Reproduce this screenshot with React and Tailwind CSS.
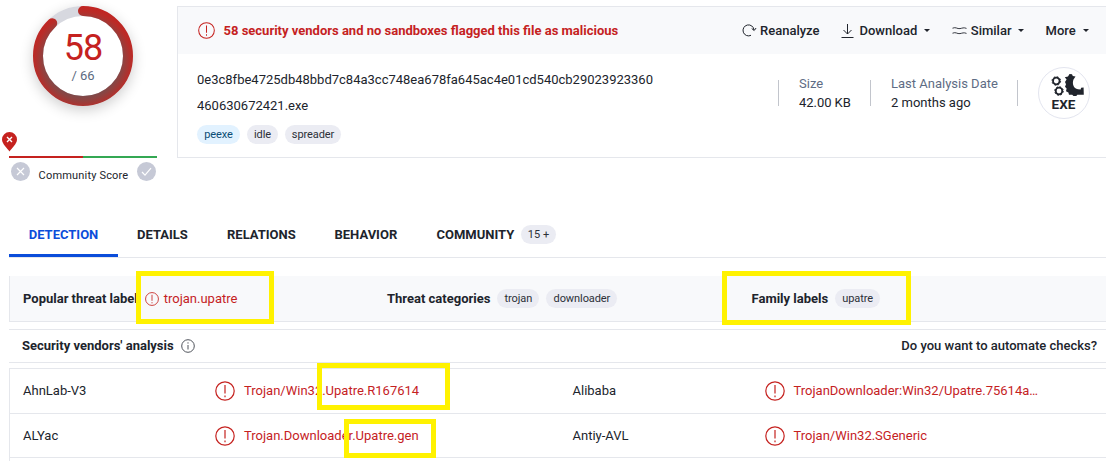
import React from "react";

function Alert({ size, sw = 1.2 }) {
  return (
    <svg className="shrink-0" width={size} height={size} viewBox="0 0 20 20" fill="none" stroke="#c5221f" strokeWidth={sw}>
      <circle cx="10" cy="10" r="9.2" />
      <path d="M10 4v8.6M10 14.5v1.7" />
    </svg>
  );
}

function Tag({ children, className = "" }) {
  return (
    <span className={"flex h-[19px] items-center rounded-full bg-[#ebecf3] text-[11px] tracking-[-0.08px] text-[#2c3038] " + className}>
      {children}
    </span>
  );
}

function Caret({ className = "" }) {
  return (
    <svg className={className} width="6" height="3" viewBox="0 0 6 3">
      <path d="M0 0h6L3 3z" fill="#20242c" />
    </svg>
  );
}

function Gauge() {
  return (
    <div className="relative mt-[6px] ml-[24px] h-[100px] w-[100px] rounded-full shadow-[0_4px_14px_rgba(0,0,0,0.2)]">
      <svg width="100" height="100" viewBox="0 0 100 100" fill="none">
        <defs>
          <radialGradient id="ring" gradientUnits="userSpaceOnUse" cx="46" cy="50" r="55">
            <stop offset="0.65" stopColor="#7d4a4a" />
            <stop offset="0.72" stopColor="#8c4442" />
            <stop offset="0.88" stopColor="#b92c28" />
            <stop offset="1" stopColor="#c5221f" />
          </radialGradient>
        </defs>
        <circle cx="50" cy="50" r="45" stroke="#d7d8df" strokeWidth="10" fill="#fff" />
        <circle cx="50" cy="50" r="45" stroke="url(#ring)" strokeWidth="10" strokeLinecap="round" strokeDasharray="248.5 400" transform="rotate(-90 50 50)" />
      </svg>
      <div className="absolute inset-0 flex flex-col items-center">
        <span className="mt-[21px] text-[36px] leading-[43px] tracking-[-0.9px] text-[#c5221f]">58</span>
        <span className="text-[13px] leading-[12px] text-[#5b6a80]">/ 66</span>
      </div>
    </div>
  );
}

function ScoreSide() {
  return (
    <div className="h-[209px] w-[168px] shrink-0">
      <Gauge />
      <svg className="-ml-[7px] mt-[26px]" width="15" height="20" viewBox="0 0 15 20">
        <path d="M7.5 19.5C5.5 16.5 0 12 0 7.5a7.5 7.5 0 0 1 15 0C15 12 9.500 16.500 7.500 19.500z" fill="#c5221f" />
        <path d="M5 5l5 5M10 5l-5 5" stroke="#fff" strokeWidth="1.4" />
      </svg>
      <div className="mt-[4px] flex h-[2px] w-[148px]">
        <div className="flex-1 bg-[#c5221f]" />
        <div className="flex-1 bg-[#34a853]" />
      </div>
      <div className="mt-[4px] flex h-[19px] w-[147px] items-center justify-between pl-[2px]">
        <svg width="19" height="19" viewBox="0 0 19 19" fill="none" stroke="#fff" strokeWidth="1.2">
          <circle cx="9.5" cy="9.500" r="9.500" fill="#c6c9d6" stroke="none" />
          <path d="M6 6l7 7M13 6l-7 7" />
        </svg>
        <span className="mt-[9px] text-[11px] leading-[16px] tracking-[0.18px] text-[#20242c]">Community Score</span>
        <svg width="19" height="19" viewBox="0 0 19 19" fill="none" stroke="#fff" strokeWidth="1.2">
          <circle cx="9.5" cy="9.500" r="9.500" fill="#c6c9d6" stroke="none" />
          <path d="M5 10l3 3.200 6-7" />
        </svg>
      </div>
    </div>
  );
}

function FileCard() {
  return (
    <div className="mt-[6px] h-[152px] w-[929px] shrink-0 border-y border-l border-[#e5e7ec]">
      <div className="flex h-[47px] items-center bg-[#f8f9fb] pl-[20px] text-[13px] font-medium">
        <Alert size={17} />
        <span className="ml-[8.5px] w-[518px] whitespace-nowrap font-bold text-[#c5221f]">
          58 security vendors and no sandboxes flagged this file as malicious
        </span>
        <svg width="15" height="13" viewBox="0 0 15 13" fill="none" stroke="#20242c">
          <path d="M9 11.300A5.500 5.500 0 1 1 12 6M9.700 4.500L12.200 6.500l1.900-2.500" />
        </svg>
        <span className="ml-[3.5px] w-[81px]">Reanalyze</span>
        <svg width="13" height="14" viewBox="0 0 13 14" fill="none" stroke="#20242c">
          <path d="M6.500 0v10M2.500 6l4 4 4-4M.5 13.500h12" />
        </svg>
        <span className="ml-[5.5px]">Download</span>
        <Caret className="ml-[6.5px]" />
        <svg className="ml-[22px]" width="15" height="9" viewBox="0 0 15 9" fill="none" stroke="#20242c" strokeWidth="0.9">
          <path d="M.5 2.200c3.500-1.600 4.500.9 7.500.4 2.500-.4 3.500-1.400 6.500-.2M.5 7.200c3.500-1.600 4.500.9 7.500.4 2.500-.4 3.500-1.400 6.500-.2" />
        </svg>
        <span className="ml-[4px]">Similar</span>
        <Caret className="ml-[6.5px]" />
        <span className="ml-[21.500px]">More</span>
        <Caret className="ml-[7px]" />
      </div>
      <div className="flex h-[103px] pl-[19px]">
        <div className="w-[581px] pt-[13px] text-[13px] leading-[26px]">
          <div>0e3c8fbe4725db48bbd7c84a3cc748ea678fa645ac4e01cd540cb29023923360</div>
          <div>460630672421.exe</div>
          <div className="mt-[6px] flex gap-[7px]">
            <Tag className="h-[19px]! w-[43px] justify-center bg-[#e2f2ff]! text-[#0b4d75]!">peexe</Tag>
            <Tag className="h-[19px]! w-[31px] justify-center">idle</Tag>
            <Tag className="h-[19px]! w-[56px] justify-center">spreader</Tag>
          </div>
        </div>
        <div className="mt-[26px] h-[26px] w-px bg-[#c2c5cc]" />
        <div className="w-[91px] pt-[20px] pl-[20px] text-[13px] leading-[19px]">
          <div className="text-[#5e6c84]">Size</div>
          <div className="tracking-[-0.05px]">42.00 KB</div>
        </div>
        <div className="mt-[26px] h-[26px] w-px bg-[#c2c5cc]" />
        <div className="w-[146px] pt-[20px] pl-[20px] text-[13px] leading-[19px]">
          <div className="text-[#5e6c84]">Last Analysis Date</div>
          <div>2 months ago</div>
        </div>
        <div className="mt-[26px] h-[26px] w-px bg-[#c2c5cc]" />
        <div className="mt-[13px] ml-[20px] flex h-[52px] w-[52px] flex-col items-center rounded-full border border-[#e3e5ef]">
          <svg className="mt-[5px] ml-[7px]" width="34" height="24" viewBox="0 0 34 24" fill="none">
            <circle cx="5.300" cy="8" r="3.300" stroke="#20242c" strokeWidth="1.800" />
            <circle cx="5.300" cy="8" r="4.300" stroke="#20242c" strokeWidth="1" strokeDasharray="1.700 1.680" />
            <circle cx="8" cy="18" r="3.300" stroke="#20242c" strokeWidth="1.800" />
            <circle cx="8" cy="18" r="4.300" stroke="#20242c" strokeWidth="1" strokeDasharray="1.700 1.680" />
            <path d="M13.800 4.200L17 3.600 18.500 1l2.500.2.800 1.800 2.700.5-2 3C21 10.500 22.300 15.500 27 16.300l2.600.2.500-1.700 2.500-.3.200 7.200h-6.500l-1 1.200h-2.800l-1.300-1.200-3.200.1-.6-2.300-2.400-1.200.6-2.800-1.600-1.700 1-2.600-1-2.300 1.600-2.400z" fill="#20242c" />
          </svg>
          <span className="-ml-px text-[13.5px] leading-[14px] font-bold">EXE</span>
        </div>
      </div>
    </div>
  );
}

function Tabs() {
  return (
    <nav className="flex h-[49px] border-b border-[#e5e7ec] text-[13px] font-bold">
      <div className="flex h-[48px] w-[109px] justify-center border-b-3 border-[#0b4dda] pt-[17px] leading-[18px] text-[#0b4dda]">DETECTION</div>
      <div className="ml-[19px] w-[90px] pt-[17px] leading-[18px]">DETAILS</div>
      <div className="w-[107.5px] pt-[17px] leading-[18px]">RELATIONS</div>
      <div className="w-[102px] pt-[17px] leading-[18px]">BEHAVIOR</div>
      <div className="w-[78px] pt-[17px] leading-[18px]">COMMUNITY</div>
      <Tag className="mt-[16px] ml-[6.5px] w-[35px] justify-center pt-px font-normal tracking-[0px]!">15 +</Tag>
    </nav>
  );
}

function Row({ cells, className }) {
  return (
    <div className={"flex items-center border-b border-l border-[#e5e7ec] pl-[13px] text-[13px] " + className}>
      {cells.map(([name, result], i) => (
        <div key={name} className={"flex items-center " + (i ? "" : "w-[549.5px]")}>
          <span className="w-[192px]">{name}</span>
          <Alert size={20} />
          <span className="ml-[9px] text-[#c5221f]">{result}</span>
        </div>
      ))}
    </div>
  );
}

export default function App() {
  return (
    <main className="relative h-[461px] w-[1106px] overflow-hidden bg-white pl-[9px] font-[Roboto,sans-serif] text-[#20242c]">
      <div className="flex h-[209px]">
        <ScoreSide />
        <FileCard />
      </div>
      <Tabs />
      <section className="mt-[18px] flex h-[46px] items-center border-b border-l border-[#e5e7ec] bg-[#f8f9fb] pl-[13px] text-[13px]">
        <div className="flex w-[364px] items-center">
          <b>Popular threat label</b>
          <span className="ml-[7px] flex"><Alert size={14} /></span>
          <span className="ml-[5px] text-[#c5221f]">trojan.upatre</span>
        </div>
        <div className="flex w-[364.5px] items-center">
          <b>Threat categories</b>
          <Tag className="ml-[7px] w-[42px] justify-center pt-px">trojan</Tag>
          <Tag className="ml-[7px] w-[71px] justify-center pt-px">downloader</Tag>
        </div>
        <b>Family labels</b>
        <Tag className="ml-[7px] w-[45px] justify-center pt-px">upatre</Tag>
      </section>
      <section className="mt-[7px] flex h-[34px] items-center border-y border-[#e5e7ec] pr-[9px] pl-[13px] text-[13px]">
        <b>Security vendors' analysis</b>
        <svg className="ml-[7px]" width="14" height="14" viewBox="0 0 14 14" fill="none" stroke="#50545c">
          <circle cx="7" cy="7" r="6.300" />
          <path d="M7 6v4.500M7 3.300v1.300" />
        </svg>
        <span className="ml-auto font-medium">Do you want to automate checks?</span>
      </section>
      <section className="mt-[5px] border-t border-[#e5e7ec]">
        <Row className="h-[45px]" cells={[["AhnLab-V3", "Trojan/Win32.Upatre.R167614"], ["Alibaba", "TrojanDownloader:Win32/Upatre.75614a…"]]} />
        <Row className="h-[44px]" cells={[["ALYac", "Trojan.Downloader.Upatre.gen"], ["Antiy-AVL", "Trojan/Win32.SGeneric"]]} />
        <div className="h-[5px] border-l border-[#e5e7ec]" />
      </section>
      <div className="absolute top-[271px] left-[136px] h-[53px] w-[138px] border-5 border-[#fff200]" />
      <div className="absolute top-[271px] left-[722px] h-[54px] w-[189px] border-5 border-[#fff200]" />
      <div className="absolute top-[363px] left-[317px] h-[47px] w-[133px] border-5 border-[#fff200]" />
      <div className="absolute top-[419px] left-[344px] h-[39px] w-[92px] border-5 border-[#fff200]" />
    </main>
  );
}
